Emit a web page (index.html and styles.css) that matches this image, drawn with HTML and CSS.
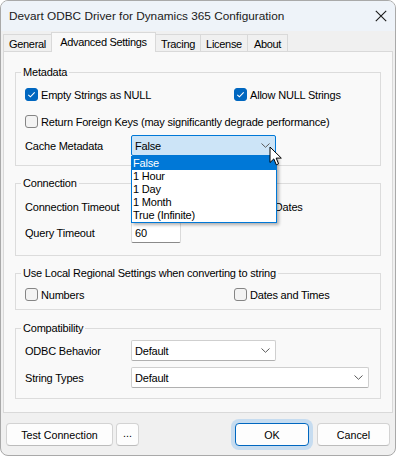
FILE: index.html
```html
<!DOCTYPE html>
<html>
<head>
<meta charset="utf-8">
<link rel="stylesheet" href="styles.css">
</head>
<body>
<div class="window">
  <div class="titlebar">
    <span class="title">Devart ODBC Driver for Dynamics 365 Configuration</span>
    <svg class="close" width="12" height="12" viewBox="0 0 12 12"><path d="M0.8 0.8 L11.2 11.2 M11.2 0.8 L0.8 11.2" stroke="#1a1a1a" stroke-width="1.1" fill="none"/></svg>
  </div>
  <div class="tabs">
    <div class="tab t-general">General</div>
    <div class="tab t-adv active">Advanced Settings</div>
    <div class="tab t-tracing">Tracing</div>
    <div class="tab t-license">License</div>
    <div class="tab t-about">About</div>
  </div>
  <div class="page">
    <div class="group g-meta">
      <div class="legend">Metadata</div>
      <div class="row mt6">
        <div class="cb-item wide"><span class="cb checked"><svg width="13" height="13" viewBox="0 0 13 13"><path d="M3.3 6.8 L5.4 8.8 L9.7 4.4" stroke="#fff" stroke-width="1.1" fill="none"/></svg></span>Empty Strings as NULL</div>
        <div class="cb-item"><span class="cb checked"><svg width="13" height="13" viewBox="0 0 13 13"><path d="M3.3 6.8 L5.4 8.8 L9.7 4.4" stroke="#fff" stroke-width="1.1" fill="none"/></svg></span>Allow NULL Strings</div>
      </div>
      <div class="row mt6">
        <div class="cb-item"><span class="cb"></span>Return Foreign Keys (may significantly degrade performance)</div>
      </div>
      <div class="row mt3">
        <div class="label">Cache Metadata</div>
        <div class="combo-wrap">
          <div class="combo open"><span class="combo-text">False</span><svg class="chev" width="9" height="5" viewBox="0 0 9 5"><path d="M0.5 0.5 L4.5 4.3 L8.5 0.5" stroke="#5a5a5a" stroke-width="1" fill="none"/></svg></div>
          <div class="dropdown">
            <div class="item sel">False</div>
            <div class="item">1 Hour</div>
            <div class="item">1 Day</div>
            <div class="item">1 Month</div>
            <div class="item">True (Infinite)</div>
          </div>
          <svg class="cursor" width="14" height="22" viewBox="0 0 14 22"><path d="M1 1 L1 16.5 L4.8 12.9 L7.3 18.8 L9.6 17.8 L7.2 12.1 L12.3 12.1 Z" fill="#fff" stroke="#000" stroke-width="1" stroke-linejoin="round"/></svg>
        </div>
      </div>
    </div>

    <div class="group g-conn">
      <div class="legend">Connection</div>
      <div class="row mt7">
        <div class="label">Connection Timeout</div>
        <div class="edit"></div>
        <div class="cb-item utc"><span class="cb"></span>UTC Dates</div>
      </div>
      <div class="row mt5">
        <div class="label">Query Timeout</div>
        <div class="edit">60</div>
      </div>
    </div>

    <div class="group g-reg">
      <div class="legend">Use Local Regional Settings when converting to string</div>
      <div class="row mt5">
        <div class="cb-item wide"><span class="cb"></span>Numbers</div>
        <div class="cb-item"><span class="cb"></span>Dates and Times</div>
      </div>
    </div>

    <div class="group g-compat">
      <div class="legend">Compatibility</div>
      <div class="row mt6">
        <div class="label">ODBC Behavior</div>
        <div class="combo"><span class="combo-text">Default</span><svg class="chev" width="9" height="5" viewBox="0 0 9 5"><path d="M0.5 0.5 L4.5 4.3 L8.5 0.5" stroke="#5a5a5a" stroke-width="1" fill="none"/></svg></div>
      </div>
      <div class="row mt6">
        <div class="label">String Types</div>
        <div class="combo long"><span class="combo-text">Default</span><svg class="chev" width="9" height="5" viewBox="0 0 9 5"><path d="M0.5 0.5 L4.5 4.3 L8.5 0.5" stroke="#5a5a5a" stroke-width="1" fill="none"/></svg></div>
      </div>
    </div>
  </div>
  <div class="buttons">
    <div class="btn b-test">Test Connection</div>
    <div class="btn b-more">...</div>
    <div class="spacer"></div>
    <div class="btn b-ok">OK</div>
    <div class="btn b-cancel">Cancel</div>
  </div>
</div>
</body>
</html>
```

FILE: styles.css
```css
* { box-sizing: border-box; }
html, body { margin: 0; padding: 0; background: #ffffff; }
body { font-family: "Liberation Sans", Arial, sans-serif; color: #000; }

.window {
  width: 396px;
  height: 456px;
  border: 1px solid #a9a9a9;
  border-radius: 8px;
  overflow: hidden;
  background: #f0f0f0;
  display: flex;
  flex-direction: column;
}

.titlebar {
  flex: none;
  height: 30px;
  background: #eef3f9;
  display: flex;
  align-items: center;
  padding-left: 8px;
}
.title { font-size: 11.8px; color: #1a1a1a; }
.close { margin-left: auto; margin-right: 8px; }

.tabs {
  flex: none;
  height: 21px;
  margin-bottom: -1px;
  padding-left: 2px;
  display: flex;
  align-items: flex-end;
  position: relative;
  z-index: 1;
}
.tab {
  height: 17px;
  margin-bottom: 1px;
  margin-left: -1px;
  border: 1px solid #d9d9d9;
  border-bottom: none;
  background: #f0f0f0;
  font-size: 11px;
  letter-spacing: -0.3px;
  display: flex;
  align-items: center;
  justify-content: center;
  padding-top: 1px;
}
.t-general { width: 49px; margin-left: 0; }
.t-adv { width: 105px; }
.t-tracing { width: 46px; }
.t-license { width: 48px; }
.t-about { width: 41px; }
.tab.active {
  height: 20px;
  margin-bottom: 0;
  background: #f9f9f9;
  padding-top: 0;
  padding-bottom: 2px;
  position: relative;
  z-index: 2;
}

.page {
  flex: none;
  margin: 0 2px;
  border: 1px solid #d9d9d9;
  background: #f9f9f9;
  padding: 20px 11px 13px;
  font-size: 11px;
  letter-spacing: -0.2px;
}

.group {
  border: 1px solid #dcdcdc;
  padding: 0 9px;
  display: flex;
  flex-direction: column;
}
.g-meta { padding-bottom: 9px; }
.g-conn { margin-top: 17px; padding-bottom: 12px; }
.g-reg { margin-top: 17px; padding-bottom: 4px; }
.g-compat { margin-top: 18px; padding-bottom: 10px; }

.legend {
  align-self: flex-start;
  height: 12px;
  line-height: 12px;
  margin-top: -7px;
  margin-left: -4px;
  padding: 0 2px;
  background: #f9f9f9;
}

.row { height: 21px; display: flex; align-items: center; }
.mt3 { margin-top: 3px; }
.mt5 { margin-top: 5px; }
.mt6 { margin-top: 6px; }
.mt7 { margin-top: 7px; }

.label { width: 106px; flex: none; }

.cb-item { display: flex; align-items: center; white-space: nowrap; }
.cb-item.wide { width: 209px; flex: none; }
.cb {
  width: 13px;
  height: 13px;
  flex: none;
  margin-right: 3px;
  border: 1px solid #858585;
  border-radius: 3px;
  background: #f3f3f3;
  position: relative;
}
.cb.checked { background: #0067c0; border-color: #0067c0; }
.cb svg { display: block; margin: -1px; }

.combo-wrap { position: relative; width: 145px; height: 21px; }
.combo {
  width: 145px;
  height: 21px;
  border: 1px solid #cfcfcf;
  border-bottom-color: #b0b0b0;
  border-radius: 2px;
  background: #ffffff;
  display: flex;
  align-items: center;
  padding-left: 3px;
  padding-right: 5px;
}
.combo.long { width: 238px; }
.combo.open { background: #cce4f7; border-color: #0078d7; }
.combo-text { flex: 1; }
.chev { flex: none; display: block; }

.dropdown {
  position: absolute;
  left: 0;
  top: 21px;
  width: 146px;
  border: 1px solid #0078d7;
  background: #ffffff;
  box-shadow: 2px 2px 3px rgba(0, 0, 0, 0.3);
  z-index: 5;
}
.item { height: 13px; line-height: 13px; padding-left: 1px; white-space: nowrap; }
.item.sel { background: #0078d7; color: #ffffff; }

.cursor { position: absolute; left: 138px; top: 11px; z-index: 6; }

.edit {
  width: 50px;
  height: 21px;
  flex: none;
  border: 1px solid #dadada;
  border-bottom-color: #8a8a8a;
  border-radius: 2px;
  background: #ffffff;
  display: flex;
  align-items: center;
  padding-left: 3px;
}
.cb-item.utc { margin-left: 53px; }

.buttons {
  flex: none;
  margin-top: 10px;
  height: 23px;
  padding: 0 5px;
  display: flex;
  font-size: 10.7px;
}
.btn {
  height: 23px;
  border: 1px solid #d3d3d3;
  border-bottom-color: #bcbcbc;
  border-radius: 4px;
  background: #fdfdfd;
  display: flex;
  align-items: center;
  justify-content: center;
}
.b-test { width: 107px; }
.b-more { width: 23px; margin-left: 3px; padding-bottom: 4px; }
.spacer { flex: 1; }
.b-ok {
  width: 74px;
  border-color: #0067c0;
  box-shadow: 0 0 0 4px #c6dcf0;
}
.b-cancel { width: 73px; margin-left: 8px; }
```
